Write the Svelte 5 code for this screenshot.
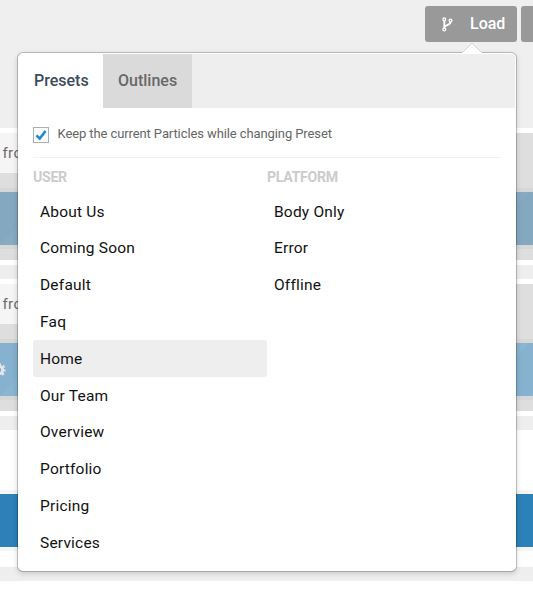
<script>
  const groups = [
    { title: 'User', items: ['About Us', 'Coming Soon', 'Default', 'Faq', 'Home', 'Our Team', 'Overview', 'Portfolio', 'Pricing', 'Services'] },
    { title: 'Platform', items: ['Body Only', 'Error', 'Offline'] }
  ];
  let selected = $state('Home');
  let keep = $state(true);
</script>

<div class="page">
  <div class="canvas">
    <div class="space"></div>
    <section class="block">
      <div class="field"><span>from</span></div>
      <div class="strip dull"></div>
    </section>
    <div class="gap"></div>
    <section class="block">
      <div class="field"><span>from</span></div>
      <div class="strip">
        <svg class="cog" width="14" height="14" viewBox="0 0 14 14">
          <circle cx="7" cy="7" r="3.7" fill="none" stroke="#e8e8ea" stroke-width="2.8" />
          <circle cx="7" cy="7" r="5.8" fill="none" stroke="#e8e8ea" stroke-width="1.8" stroke-dasharray="2.6 1.955" stroke-dashoffset="1.3" />
        </svg>
      </div>
    </section>
    <div class="gap"></div>
    <section class="plain"><div class="solid"></div></section>
    <div class="gap"></div>
  </div>

  <div class="toolbar">
    <button class="btn load">
      <svg width="11" height="15" viewBox="0 0 11 15" fill="none" stroke="#fff">
        <circle cx="2.3" cy="2.4" r="1.4" stroke-width="1.3" />
        <circle cx="2.3" cy="12.4" r="1.4" stroke-width="1.3" />
        <circle cx="8.5" cy="3.5" r="1.4" stroke-width="1.3" />
        <path d="M2.3 4v7M8.5 5c0 3.6-5.9 2.6-6.1 5.4" stroke-width="1.9" />
      </svg>
      <span>Load</span>
    </button>
    <button class="btn next" aria-label="More"></button>
  </div>

  <div class="popover">
    <svg class="arrow" width="22" height="12" viewBox="0 0 22 12">
      <path d="M1 11L11 1L21 11V12H1Z" fill="#fff" />
      <path d="M1 11L11 1L21 11" fill="none" stroke="#d5d5d5" />
    </svg>
    <nav class="tabs">
      <a class="tab active" href="#presets">Presets</a>
      <a class="tab" href="#outlines">Outlines</a>
    </nav>
    <div class="body">
      <label class="keep">
        <input type="checkbox" bind:checked={keep} />
        <span class="box">
          {#if keep}
            <svg width="12" height="12" viewBox="0 0 12 12"><path d="M1.4 6.4L4.7 9.5L10.6 2" fill="none" stroke="#2289c9" stroke-width="2.6" /></svg>
          {/if}
        </span>
        <span class="caption">Keep the current Particles while changing Preset</span>
      </label>
      <div class="columns">
        {#each groups as group}
          <div class="column">
            <h3>{group.title}</h3>
            <ul>
              {#each group.items as item}
                <li><button class:selected={selected === item} onclick={() => (selected = item)}>{item}</button></li>
              {/each}
            </ul>
          </div>
        {/each}
      </div>
    </div>
  </div>
</div>

<style>
  :global(body) { margin: 0; }
  .page { position: relative; width: 533px; height: 592px; overflow: hidden; background: #fff; font-family: Roboto, sans-serif; }
  .page, .page * { box-sizing: border-box; }
  button { border: 0; margin: 0; font-family: inherit; text-align: left; }
  .canvas { display: flex; flex-direction: column; }
  .space { height: 128px; background: #efefef; }
  .block { height: 137px; border: solid #fff; border-width: 5px 0; background: #dedede; }
  .field { width: 440px; height: 40px; background: #f5f5f5; color: #6c6c6c; font-size: 15.2px; line-height: 40px; padding-left: 2.5px; letter-spacing: .3px; }
  .strip { margin-top: 15px; height: 61px; border: solid #d7d7d7; border-width: 4px 0; display: flex; align-items: center; background: linear-gradient(135deg, #86b2cf 25%, #8ab6d1 25% 50%, #86b2cf 50% 75%, #8ab6d1 75%) 0 0 / 106px 106px; }
  .strip.dull { background: linear-gradient(135deg, #84a8bf 25%, #88abc1 25% 50%, #84a8bf 50% 75%, #88abc1 75%) 0 0 / 106px 106px; }
  .cog { margin-left: -8px; }
  .gap { height: 14px; background: #eee; }
  .plain { height: 137px; padding-top: 60px; background: #fff; }
  .solid { height: 61px; border: solid #f5f5f5; border-width: 4px 0; background: #2b81b8; }
  .toolbar { position: absolute; left: 425px; top: 6px; display: flex; gap: 4px; }
  .btn { height: 36px; border-radius: 3px; background: #999; color: #fff; }
  .load { width: 92px; padding: 0 0 0 17px; display: flex; align-items: center; gap: 17px; font-size: 16px; font-weight: 500; line-height: 36px; }
  .next { width: 60px; flex: none; padding: 0; }
  .popover { position: absolute; left: 17px; top: 52px; width: 500px; height: 520px; padding: 1px; border: 1px solid rgba(0, 0, 0, .2); border-radius: 6px; background: #fff; background-clip: padding-box; box-shadow: 0 2px 5px rgba(0, 0, 0, .15); }
  .arrow { position: absolute; left: 443px; top: -11px; }
  .tabs { height: 54px; display: flex; background: #eee; border-radius: 4px 4px 0 0; overflow: hidden; }
  .tab { width: 89px; padding-left: 15px; line-height: 54px; font-size: 16px; font-weight: 500; color: #686868; background: #dadada; text-decoration: none; }
  .tab.active { width: 84px; color: #3b4b5a; background: #fff; }
  .body { padding: 19px 14px 0; }
  .keep { display: flex; align-items: flex-start; height: 31px; border-bottom: 1px solid #f2f2f2; font-size: 13px; line-height: 14px; letter-spacing: -.1px; color: #666; }
  .keep input { position: absolute; opacity: 0; }
  .box { width: 16px; height: 16px; flex: none; border: 1px solid #aab0b6; margin-right: 8.5px; display: flex; align-items: center; justify-content: center; }
  .columns { display: flex; }
  .column { width: 234px; }
  h3 { margin: 0; padding-top: 9px; height: 35.25px; font-size: 14.2px; line-height: 20px; letter-spacing: -.35px; font-weight: 700; color: #ccc; text-transform: uppercase; }
  ul { margin: 0; padding: 0; list-style: none; }
  li { height: 36.8px; }
  li button { display: block; width: 234px; height: 36.8px; padding: 0 7px; line-height: 36px; font-size: 15.5px; letter-spacing: .2px; color: #111; background: none; border-radius: 3px; }
  li .selected { background: #eee; }
</style>
